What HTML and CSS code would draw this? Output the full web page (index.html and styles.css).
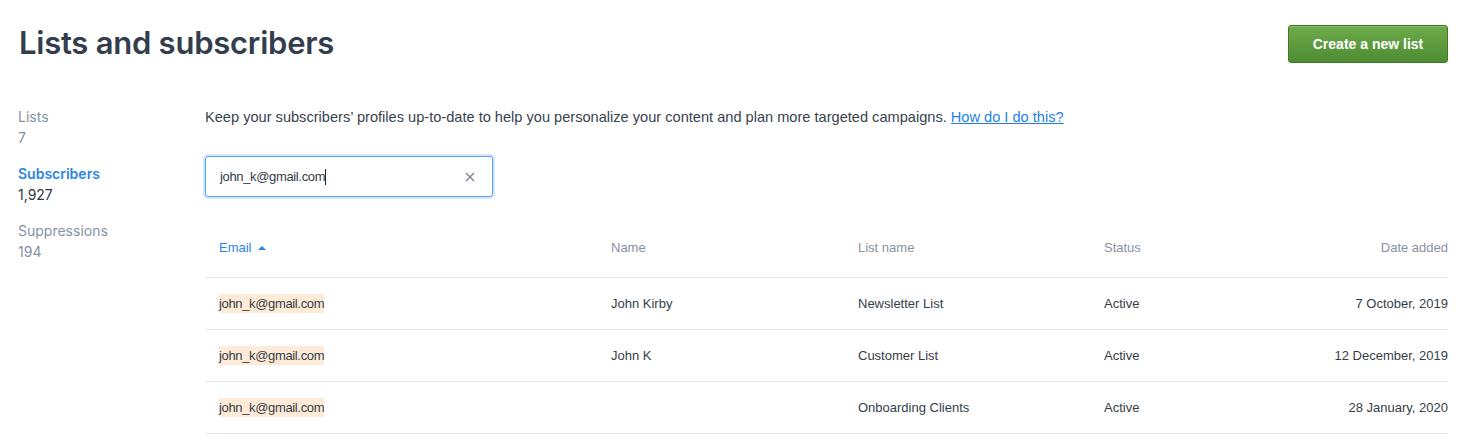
FILE: index.html
```html
<!DOCTYPE html>
<html lang="en">
<head>
    <meta charset="UTF-8">
    <title>Lists and subscribers</title>
    <link rel="stylesheet" href="styles.css">
</head>
<body>
    <div class="page-header">
        <h1>Lists and subscribers</h1>
        <button class="btn-create">Create a new list</button>
    </div>
    <div class="layout">
        <div class="sidebar">
            <div class="nav-item">
                <div class="nav-label">Lists</div>
                <div class="nav-count">7</div>
            </div>
            <div class="nav-item active">
                <div class="nav-label">Subscribers</div>
                <div class="nav-count">1,927</div>
            </div>
            <div class="nav-item">
                <div class="nav-label">Suppressions</div>
                <div class="nav-count">194</div>
            </div>
        </div>
        <div class="main">
            <p class="intro">Keep your subscribers’ profiles up-to-date to help you personalize your content and plan more targeted campaigns. <a href="#">How do I do this?</a></p>
            <div class="search">
                <span class="search-value">john_k@gmail.com</span><span class="caret"></span>
                <span class="search-clear">
                    <svg width="10" height="10" viewBox="0 0 10 10"><path d="M1 1L9 9M9 1L1 9" stroke="#7b8594" stroke-width="1.4" fill="none"/></svg>
                </span>
            </div>
            <table class="subs">
                <thead>
                    <tr>
                        <th class="col-email sorted">Email <span class="sort-arrow"></span></th>
                        <th class="col-name">Name</th>
                        <th class="col-list">List name</th>
                        <th class="col-status">Status</th>
                        <th class="col-date">Date added</th>
                    </tr>
                </thead>
                <tbody>
                    <tr>
                        <td><mark>john_k@gmail.com</mark></td>
                        <td>John Kirby</td>
                        <td>Newsletter List</td>
                        <td>Active</td>
                        <td class="col-date">7 October, 2019</td>
                    </tr>
                    <tr>
                        <td><mark>john_k@gmail.com</mark></td>
                        <td>John K</td>
                        <td>Customer List</td>
                        <td>Active</td>
                        <td class="col-date">12 December, 2019</td>
                    </tr>
                    <tr>
                        <td><mark>john_k@gmail.com</mark></td>
                        <td></td>
                        <td>Onboarding Clients</td>
                        <td>Active</td>
                        <td class="col-date">28 January, 2020</td>
                    </tr>
                </tbody>
            </table>
        </div>
    </div>
</body>
</html>
```

FILE: styles.css
```css
html, body {
    margin: 0;
    padding: 0;
    background: #fff;
}
body {
    font-family: "Liberation Sans", Arial, sans-serif;
    color: #333c48;
    padding: 0 30px 0 18px;
}
.page-header {
    display: flex;
    justify-content: space-between;
    align-items: flex-start;
    padding-top: 25px;
    height: 70px;
}
h1 {
    margin: 0;
    margin-left: 1px;
    font-family: "Inter", sans-serif;
    font-weight: 600;
    font-size: 31px;
    line-height: 36px;
    letter-spacing: -0.25px;
    color: #323e4d;
}
.btn-create {
    width: 160px;
    height: 38px;
    border: 1px solid #3f7a28;
    border-radius: 3px;
    background: linear-gradient(#6eab4a, #4e8c33);
    color: #fff;
    font-family: "Liberation Sans", Arial, sans-serif;
    font-weight: bold;
    font-size: 14px;
    box-shadow: inset 0 1px 0 rgba(255,255,255,0.2);
}
.layout {
    display: flex;
}
.sidebar {
    width: 187px;
    flex-shrink: 0;
    font-family: "Inter", sans-serif;
    font-size: 14px;
    line-height: 21px;
    color: #8592a4;
    padding-top: 11px;
}
.nav-item {
    margin-bottom: 15px;
}
.nav-item.active .nav-label {
    color: #2b84e6;
    font-weight: 600;
}
.nav-item.active .nav-count {
    color: #2f3945;
}
.main {
    flex: 1;
}
.intro {
    margin: 12px 0 0;
    font-size: 14.6px;
    line-height: 20px;
    color: #39434f;
}
.intro a {
    color: #1f7fe5;
}
.search {
    display: flex;
    align-items: center;
    box-sizing: border-box;
    width: 288px;
    height: 41px;
    margin-top: 29px;
    padding: 0 14px;
    border: 1px solid #58a0f0;
    border-radius: 3px;
    box-shadow: 0 0 0 2px #d6e7fb;
    font-size: 13px;
    color: #333c48;
}
.search-value {
    letter-spacing: -0.35px;
}
.caret {
    width: 1px;
    height: 16px;
    background: #222;
}
.search-clear {
    margin-left: auto;
    margin-right: 3px;
    display: flex;
}
.subs {
    width: 100%;
    margin-top: 20px;
    border-collapse: collapse;
    font-size: 13px;
}
.subs th {
    font-weight: normal;
    text-align: left;
    color: #8792a2;
    height: 60px;
    padding: 0 14px;
    border-bottom: 1px solid #e3e6ea;
}
.subs td {
    height: 51px;
    padding: 0 14px;
    border-bottom: 1px solid #e3e6ea;
    color: #353e49;
}
.subs th.sorted {
    color: #2b84e6;
}
.sort-arrow {
    display: inline-block;
    width: 0;
    height: 0;
    margin-left: 3px;
    vertical-align: 2px;
    border-left: 4px solid transparent;
    border-right: 4px solid transparent;
    border-bottom: 4px solid #2b84e6;
}
.col-email { width: 364px; }
.col-name { width: 219px; }
.col-list { width: 218px; }
.col-status { width: 200px; }
.subs .col-date {
    text-align: right;
    padding-right: 0;
}
mark {
    background: #fdebd7;
    color: inherit;
    padding: 2px 0;
    letter-spacing: -0.35px;
}
```
